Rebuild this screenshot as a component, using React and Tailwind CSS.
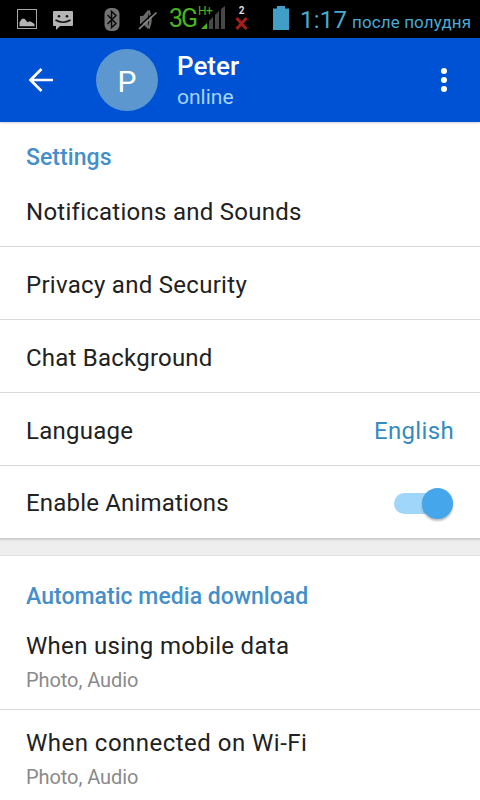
function StatusBar() {
  return (
    <div className="flex h-[38px] shrink-0 items-start bg-black">
      <svg className="mt-[9px] ml-[17px] h-5 w-5 shrink-0" viewBox="0 0 20 20">
        <rect x="0.5" y="0.5" width="19" height="19" fill="none" stroke="#a9a9a9" strokeWidth="1" />
        <path d="M2.500 17.200v-4l2.500-3.500h2.500l3 3.500 2-1 2 .8 3 2v2.200z" fill="#b4b4b4" />
      </svg>
      <svg className="mt-[11px] ml-4 h-[19px] w-5 shrink-0" viewBox="0 0 20 19">
        <path d="M1 0h18q1 0 1 1v13q0 1-1 1H7l-4 4v-4H1q-1 0-1-1V1q0-1 1-1z" fill="#b4b4b4" />
        <circle cx="6" cy="5.200" r="1.300" fill="#111" />
        <circle cx="14" cy="5.200" r="1.300" fill="#111" />
        <path d="M2.500 9q7.500 4.500 15 0" fill="none" stroke="#111" strokeWidth="1.500" />
      </svg>
      <svg className="mt-2 ml-[31px] h-[23px] w-4 shrink-0" viewBox="0 0 16 23">
        <rect x="0.500" y="0" width="15" height="23" rx="6" fill="#737373" />
        <path d="M3.500 7l8.500 8.500-4.500 4V3.500L12 7.500 3.500 16" fill="none" stroke="#0a0a0a" strokeWidth="1.500" />
      </svg>
      <svg className="mt-[9px] ml-[18px] h-[21px] w-5 shrink-0" viewBox="0 0 20 21">
        <path d="M2 7h3l5-6v19l-5-5H2z" fill="#6a6a6a" />
        <path d="M10.500 1.500q4 9 0 18" fill="none" stroke="#6a6a6a" strokeWidth="2.500" />
        <path d="M0 18.500L17.500 2" stroke="#000" strokeWidth="1.500" />
        <path d="M1 20L18.500 3.500" stroke="#8a8a8a" strokeWidth="1.700" />
      </svg>
      <div className="ml-[11px] flex h-[38px] w-[60px] shrink-0 items-start">
        <span className="mt-1 w-[28px] shrink-0 text-[25px] leading-[29px] tracking-[-2px] text-[#4ab31f]">3G</span>
        <div className="flex w-[32px] flex-col">
          <span className="mt-[4px] h-3 pl-px text-[12px] leading-[14px] tracking-[-0.500px] text-[#4ab31f]">H+</span>
          <svg className="-mt-[10px] ml-[4px] h-[23px] w-6 shrink-0" viewBox="0 0 24 23">
            <path d="M0 23l6-6v6z" fill="#4ab31f" />
            <path d="M8 15l4-4v12H8zM14 9l4-4v18h-4zM20 3l4-3v23h-4z" fill="#484848" />
          </svg>
        </div>
      </div>
      <div className="ml-[6px] flex w-[13px] shrink-0 flex-col items-center">
        <span className="mt-[5px] h-[12px] text-[10px] leading-[12px] font-bold text-[#ddd]">2</span>
        <svg className="h-[13px] w-[13px]" viewBox="0 0 13 13">
          <path d="M1.500 1L11.500 12M11.500 1L1.500 12" stroke="#a81d1a" strokeWidth="3" />
        </svg>
      </div>
      <svg className="mt-[6px] ml-[25px] h-6 w-4 shrink-0" viewBox="0 0 16 24">
        <path d="M4 0h8v2.500h4V24H0V2.500h4z" fill="#419fc7" />
      </svg>
      <span className="mt-[6px] ml-[11px] w-[52px] shrink-0 text-[24px] leading-[28px] tracking-[0.200px] text-[#4aaad3]">1:17</span>
      <span className="mt-[11px] text-[17px] leading-[22px] tracking-[0.120px] whitespace-nowrap text-[#4aaad3]">после полудня</span>
    </div>
  );
}

function Header() {
  return (
    <header className="relative z-10 flex h-[84px] shrink-0 items-center bg-[#0052d4] shadow-[0_1px_2px_rgba(0,0,0,0.2)]">
      <svg className="ml-[29px] h-6 w-6 shrink-0" viewBox="0 0 24 24">
        <path d="M24 12H2M12.500 1L1.500 12l11 11" fill="none" stroke="#fff" strokeWidth="2.700" />
      </svg>
      <div className="ml-[43px] flex h-[62px] w-[62px] shrink-0 items-center justify-center rounded-full bg-[#5c98cf] pt-[2px] text-[30px] text-white">
        P
      </div>
      <div className="ml-[19px] flex flex-1 flex-col pt-[2px]">
        <h1 className="text-[26px] leading-[30px] font-medium text-white">Peter</h1>
        <span className="mt-px text-[21px] leading-[30px] text-[#a7d4fb]">online</span>
      </div>
      <svg className="mr-[33px] h-6 w-[6px] shrink-0" viewBox="0 0 6 24" fill="#fff">
        <circle cx="3" cy="3" r="3" />
        <circle cx="3" cy="12" r="3" />
        <circle cx="3" cy="21" r="3" />
      </svg>
    </header>
  );
}

function Row({ children }) {
  return (
    <div className="flex h-[73px] shrink-0 items-center justify-between border-b border-[#d9d9d9] px-[26px] pt-1 text-[24px] leading-7 text-[#212121]">
      {children}
    </div>
  );
}

function DownloadRow({ title, detail }) {
  return (
    <div className="flex h-[97px] shrink-0 flex-col border-b border-[#d9d9d9] px-[26px] pt-[19px]">
      <span className="text-[24px] leading-7 text-[#212121]">{title}</span>
      <span className="mt-[8px] text-[20px] leading-6 tracking-[-0.080px] text-[#8a8a8a]">{detail}</span>
    </div>
  );
}

export default function App() {
  return (
    <div className="flex h-[800px] w-[480px] flex-col overflow-hidden bg-white font-['Roboto',sans-serif]">
      <StatusBar />
      <Header />
      <section className="flex shrink-0 flex-col">
        <h2 className="h-[52px] px-[26px] pt-[22px] text-[23px] leading-7 font-medium tracking-[0.060px] text-[#448fca]">Settings</h2>
        <Row><span className="tracking-[0.260px]">Notifications and Sounds</span></Row>
        <Row><span className="tracking-[0.290px]">Privacy and Security</span></Row>
        <Row><span className="tracking-[0.220px]">Chat Background</span></Row>
        <Row>
          <span className="tracking-[0.250px]">Language</span>
          <span className="tracking-[0.350px] text-[#348bc1]">English</span>
        </Row>
        <div className="flex h-[73px] shrink-0 items-center justify-between border-b border-[#ccc] pr-[27px] pl-[26px] pt-[2px] text-[24px] leading-7 text-[#212121]">
          <span className="tracking-[0.180px]">Enable Animations</span>
          <span className="flex h-[21px] w-[59px] items-center justify-end rounded-full bg-[#a0d6fa]">
            <span className="h-[31px] w-[31px] shrink-0 rounded-full bg-[#45a6eb] shadow-[0_2px_2px_rgba(0,0,0,0.25)]" />
          </span>
        </div>
      </section>
      <div className="h-[17px] shrink-0 border-b border-[#e1e1e1] bg-[#eee] shadow-[inset_0_2px_2px_-1px_rgba(0,0,0,0.12)]" />
      <section className="flex shrink-0 flex-col">
        <h2 className="h-[57px] px-[26px] pt-[27px] text-[23px] leading-7 font-medium tracking-[0.030px] text-[#448fca]">Automatic media download</h2>
        <DownloadRow title={<span className="tracking-[0.300px]">When using mobile data</span>} detail="Photo, Audio" />
        <DownloadRow title={<span className="tracking-[0.480px]">When connected on Wi-Fi</span>} detail="Photo, Audio" />
      </section>
    </div>
  );
}
